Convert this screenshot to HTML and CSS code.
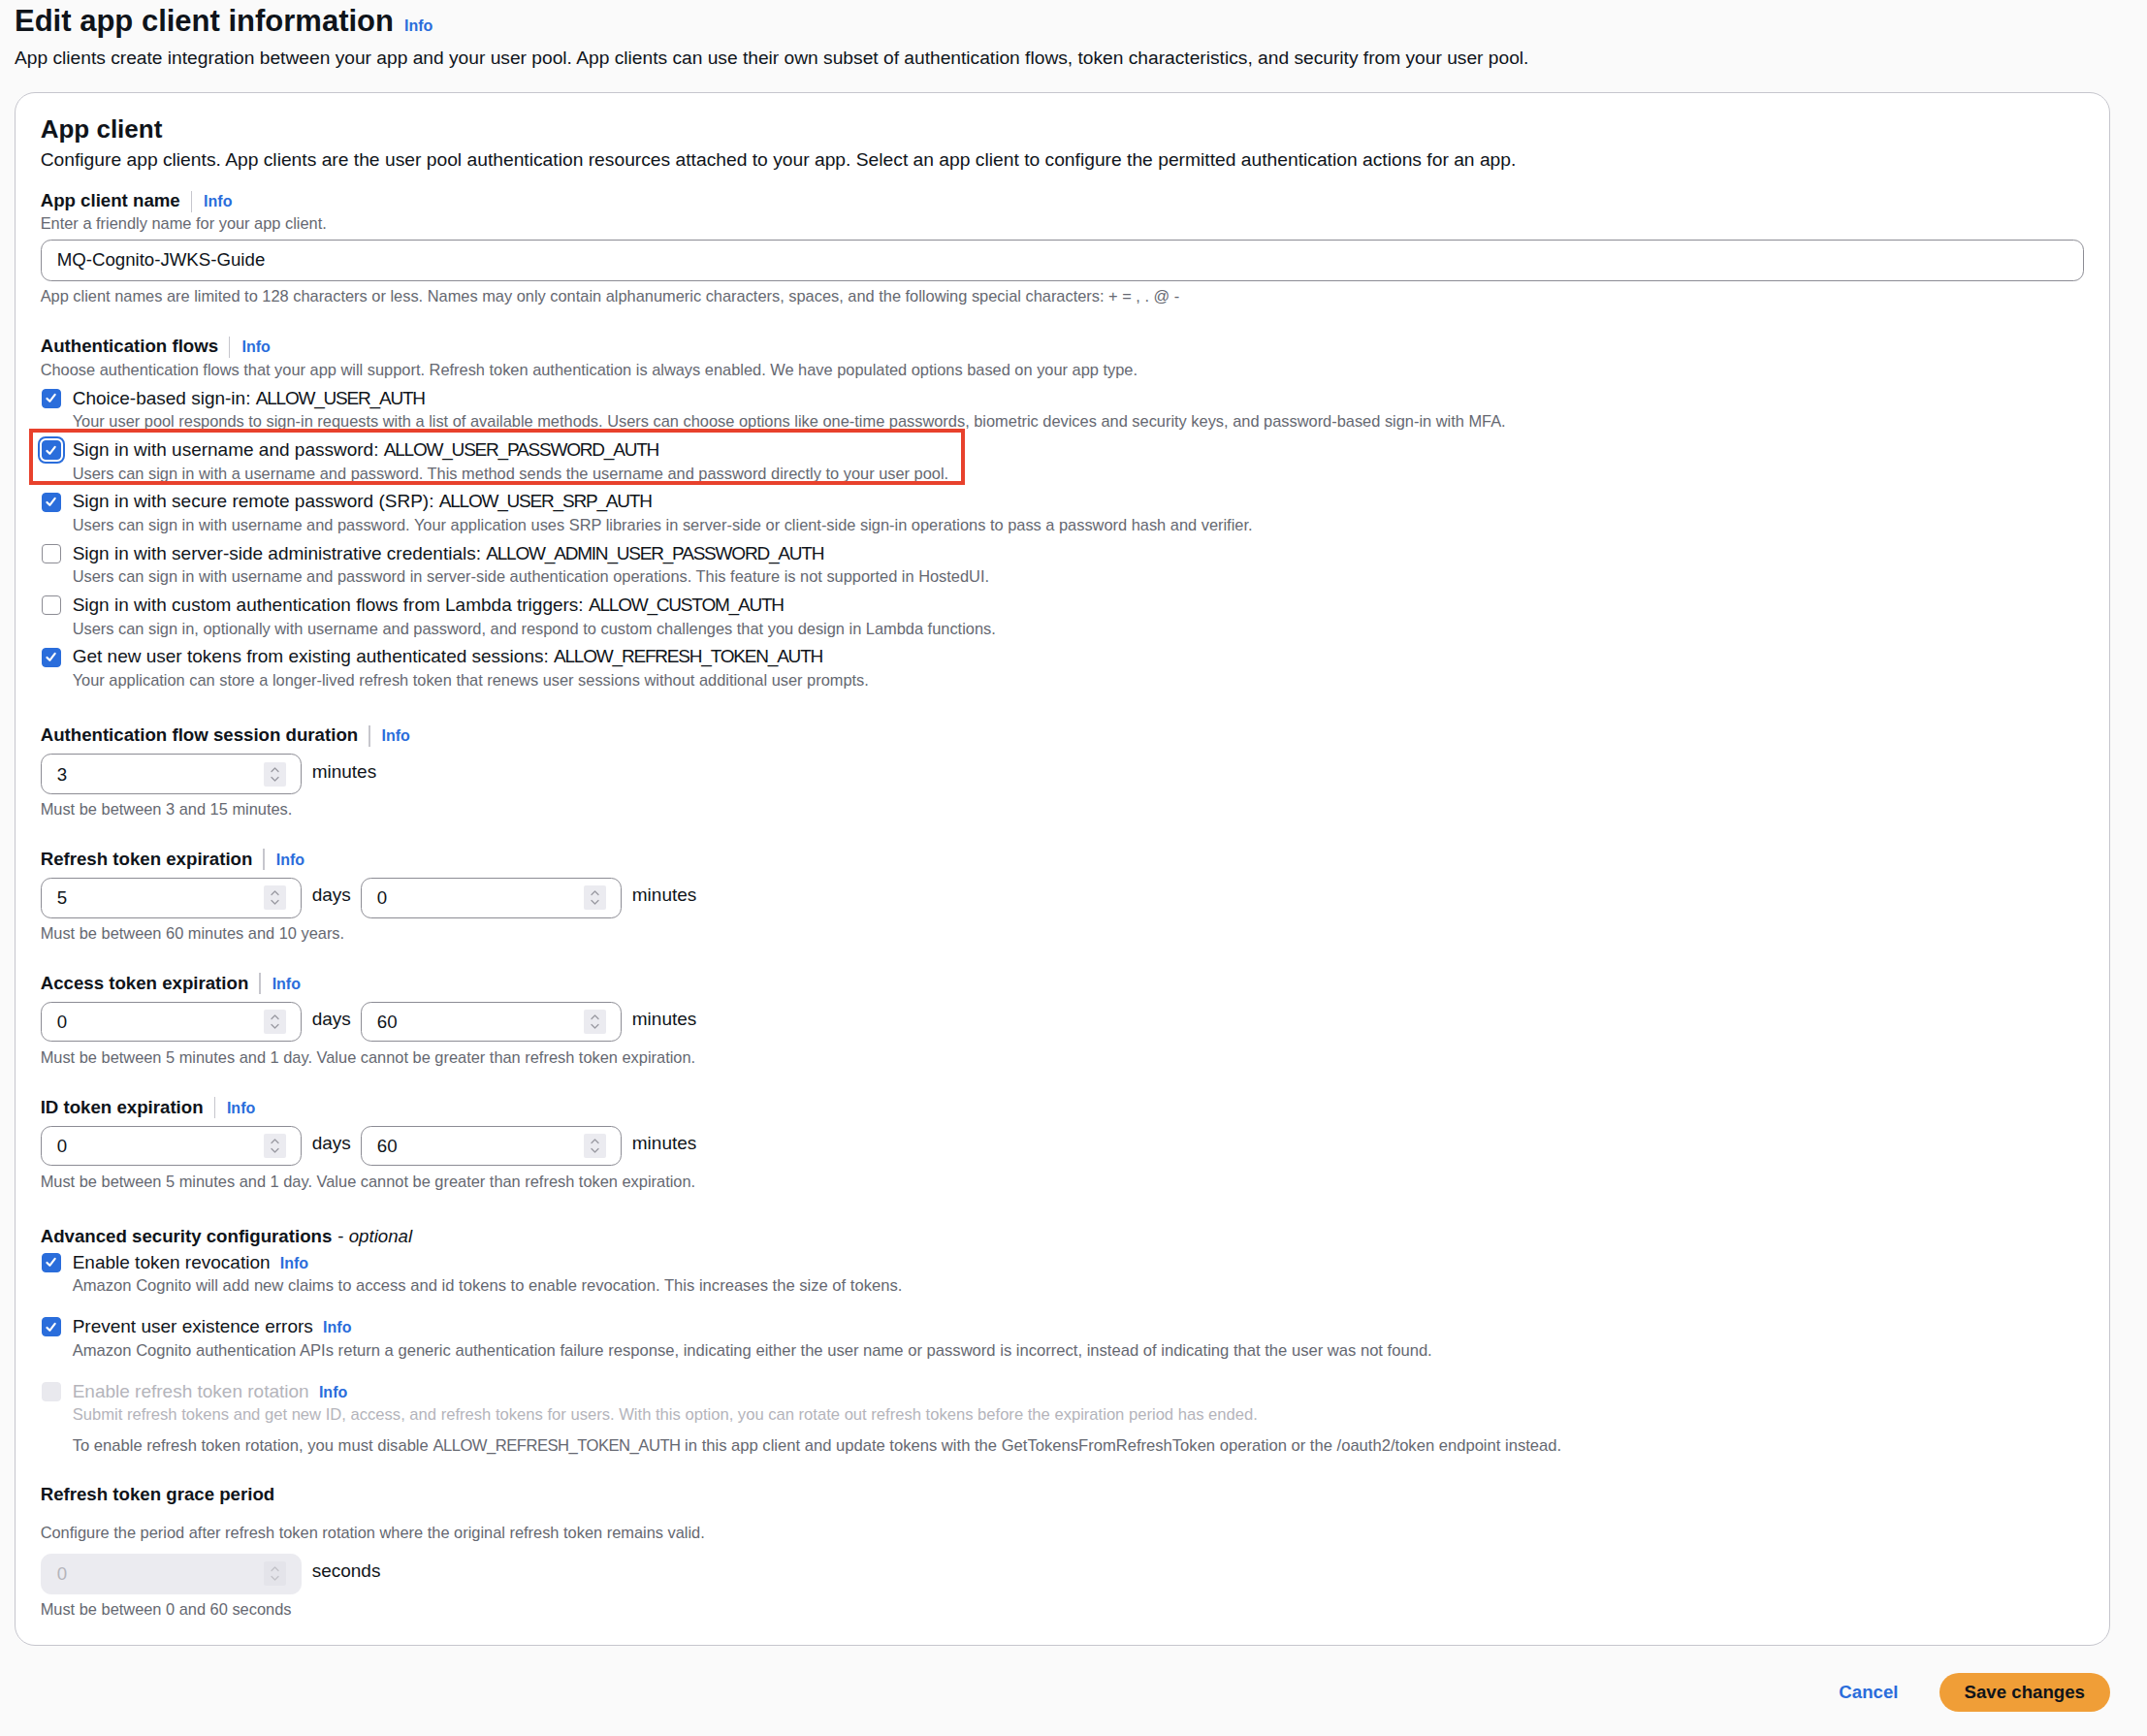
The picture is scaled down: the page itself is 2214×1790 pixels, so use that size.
FILE: index.html
```html
<!DOCTYPE html>
<html lang="en">
<head>
<meta charset="utf-8">
<title>Edit app client information</title>
<link rel="stylesheet" href="styles.css">
</head>
<body>
<div class="page">
  <header class="page-header">
    <h1 class="page-title">Edit app client information <a class="info info-title">Info</a></h1>
    <p class="page-desc">App clients create integration between your app and your user pool. App clients can use their own subset of authentication flows, token characteristics, and security from your user pool.</p>
  </header>

  <section class="card">
    <h2 class="card-title">App client</h2>
    <p class="card-desc">Configure app clients. App clients are the user pool authentication resources attached to your app. Select an app client to configure the permitted authentication actions for an app.</p>

    <div class="field field-first">
      <div class="field-label"><span class="label-text">App client name</span><span class="divider"></span><a class="info">Info</a></div>
      <div class="field-desc">Enter a friendly name for your app client.</div>
      <div class="text-input">MQ-Cognito-JWKS-Guide</div>
      <div class="field-constraint">App client names are limited to 128 characters or less. Names may only contain alphanumeric characters, spaces, and the following special characters: + = , . @ -</div>
    </div>

    <div class="field field-flows">
      <div class="field-label"><span class="label-text">Authentication flows</span><span class="divider"></span><a class="info">Info</a></div>
      <div class="field-desc">Choose authentication flows that your app will support. Refresh token authentication is always enabled. We have populated options based on your app type.</div>
      <div class="cb-list">
        <div class="cb-item">
          <span class="cb checked"><svg viewBox="0 0 14 14"><path d="M3.2 7.4 L5.9 10.1 L10.9 3.6"/></svg></span>
          <div class="cb-body">
            <div class="cb-label">Choice-based sign-in: <span class="ident">ALLOW_USER_AUTH</span></div>
            <div class="cb-desc">Your user pool responds to sign-in requests with a list of available methods. Users can choose options like one-time passwords, biometric devices and security keys, and password-based sign-in with MFA.</div>
          </div>
        </div>
        <div class="cb-item highlighted">
          <span class="cb checked focused"><svg viewBox="0 0 14 14"><path d="M3.2 7.4 L5.9 10.1 L10.9 3.6"/></svg></span>
          <div class="cb-body">
            <div class="cb-label">Sign in with username and password: <span class="ident">ALLOW_USER_PASSWORD_AUTH</span></div>
            <div class="cb-desc">Users can sign in with a username and password. This method sends the username and password directly to your user pool.</div>
          </div>
          <span class="highlight-box"></span>
        </div>
        <div class="cb-item">
          <span class="cb checked"><svg viewBox="0 0 14 14"><path d="M3.2 7.4 L5.9 10.1 L10.9 3.6"/></svg></span>
          <div class="cb-body">
            <div class="cb-label">Sign in with secure remote password (SRP): <span class="ident">ALLOW_USER_SRP_AUTH</span></div>
            <div class="cb-desc">Users can sign in with username and password. Your application uses SRP libraries in server-side or client-side sign-in operations to pass a password hash and verifier.</div>
          </div>
        </div>
        <div class="cb-item">
          <span class="cb"></span>
          <div class="cb-body">
            <div class="cb-label">Sign in with server-side administrative credentials: <span class="ident">ALLOW_ADMIN_USER_PASSWORD_AUTH</span></div>
            <div class="cb-desc">Users can sign in with username and password in server-side authentication operations. This feature is not supported in HostedUI.</div>
          </div>
        </div>
        <div class="cb-item">
          <span class="cb"></span>
          <div class="cb-body">
            <div class="cb-label">Sign in with custom authentication flows from Lambda triggers: <span class="ident">ALLOW_CUSTOM_AUTH</span></div>
            <div class="cb-desc">Users can sign in, optionally with username and password, and respond to custom challenges that you design in Lambda functions.</div>
          </div>
        </div>
        <div class="cb-item">
          <span class="cb checked"><svg viewBox="0 0 14 14"><path d="M3.2 7.4 L5.9 10.1 L10.9 3.6"/></svg></span>
          <div class="cb-body">
            <div class="cb-label">Get new user tokens from existing authenticated sessions: <span class="ident">ALLOW_REFRESH_TOKEN_AUTH</span></div>
            <div class="cb-desc">Your application can store a longer-lived refresh token that renews user sessions without additional user prompts.</div>
          </div>
        </div>
      </div>
    </div>

    <div class="field field-session">
      <div class="field-label"><span class="label-text">Authentication flow session duration</span><span class="divider"></span><a class="info">Info</a></div>
      <div class="num-row">
        <div class="num-input"><span class="num-value">3</span><span class="spinner"><svg viewBox="0 0 23 25"><path d="M8 9.5 L11.5 6 L15 9.5"/><path d="M8 15.5 L11.5 19 L15 15.5"/></svg></span></div>
        <span class="unit">minutes</span>
      </div>
      <div class="field-constraint">Must be between 3 and 15 minutes.</div>
    </div>

    <div class="field field-token">
      <div class="field-label"><span class="label-text">Refresh token expiration</span><span class="divider"></span><a class="info">Info</a></div>
      <div class="num-row">
        <div class="num-input"><span class="num-value">5</span><span class="spinner"><svg viewBox="0 0 23 25"><path d="M8 9.5 L11.5 6 L15 9.5"/><path d="M8 15.5 L11.5 19 L15 15.5"/></svg></span></div>
        <span class="unit">days</span>
        <div class="num-input"><span class="num-value">0</span><span class="spinner"><svg viewBox="0 0 23 25"><path d="M8 9.5 L11.5 6 L15 9.5"/><path d="M8 15.5 L11.5 19 L15 15.5"/></svg></span></div>
        <span class="unit">minutes</span>
      </div>
      <div class="field-constraint">Must be between 60 minutes and 10 years.</div>
    </div>

    <div class="field field-token">
      <div class="field-label"><span class="label-text">Access token expiration</span><span class="divider"></span><a class="info">Info</a></div>
      <div class="num-row">
        <div class="num-input"><span class="num-value">0</span><span class="spinner"><svg viewBox="0 0 23 25"><path d="M8 9.5 L11.5 6 L15 9.5"/><path d="M8 15.5 L11.5 19 L15 15.5"/></svg></span></div>
        <span class="unit">days</span>
        <div class="num-input"><span class="num-value">60</span><span class="spinner"><svg viewBox="0 0 23 25"><path d="M8 9.5 L11.5 6 L15 9.5"/><path d="M8 15.5 L11.5 19 L15 15.5"/></svg></span></div>
        <span class="unit">minutes</span>
      </div>
      <div class="field-constraint">Must be between 5 minutes and 1 day. Value cannot be greater than refresh token expiration.</div>
    </div>

    <div class="field field-token">
      <div class="field-label"><span class="label-text">ID token expiration</span><span class="divider"></span><a class="info">Info</a></div>
      <div class="num-row">
        <div class="num-input"><span class="num-value">0</span><span class="spinner"><svg viewBox="0 0 23 25"><path d="M8 9.5 L11.5 6 L15 9.5"/><path d="M8 15.5 L11.5 19 L15 15.5"/></svg></span></div>
        <span class="unit">days</span>
        <div class="num-input"><span class="num-value">60</span><span class="spinner"><svg viewBox="0 0 23 25"><path d="M8 9.5 L11.5 6 L15 9.5"/><path d="M8 15.5 L11.5 19 L15 15.5"/></svg></span></div>
        <span class="unit">minutes</span>
      </div>
      <div class="field-constraint">Must be between 5 minutes and 1 day. Value cannot be greater than refresh token expiration.</div>
    </div>

    <div class="field field-advanced">
      <div class="field-label"><span class="label-text">Advanced security configurations</span><span class="optional">- <i>optional</i></span></div>
      <div class="adv-list">
        <div class="cb-item">
          <span class="cb checked"><svg viewBox="0 0 14 14"><path d="M3.2 7.4 L5.9 10.1 L10.9 3.6"/></svg></span>
          <div class="cb-body">
            <div class="cb-label">Enable token revocation <a class="info info-inline">Info</a></div>
            <div class="cb-desc">Amazon Cognito will add new claims to access and id tokens to enable revocation. This increases the size of tokens.</div>
          </div>
        </div>
        <div class="cb-item">
          <span class="cb checked"><svg viewBox="0 0 14 14"><path d="M3.2 7.4 L5.9 10.1 L10.9 3.6"/></svg></span>
          <div class="cb-body">
            <div class="cb-label">Prevent user existence errors <a class="info info-inline">Info</a></div>
            <div class="cb-desc">Amazon Cognito authentication APIs return a generic authentication failure response, indicating either the user name or password is incorrect, instead of indicating that the user was not found.</div>
          </div>
        </div>
        <div class="cb-item disabled">
          <span class="cb"></span>
          <div class="cb-body">
            <div class="cb-label">Enable refresh token rotation <a class="info info-inline">Info</a></div>
            <div class="cb-desc">Submit refresh tokens and get new ID, access, and refresh tokens for users. With this option, you can rotate out refresh tokens before the expiration period has ended.</div>
            <div class="cb-note">To enable refresh token rotation, you must disable <span class="ident">ALLOW_REFRESH_TOKEN_AUTH</span> in this app client and update tokens with the GetTokensFromRefreshToken operation or the /oauth2/token endpoint instead.</div>
          </div>
        </div>
      </div>
    </div>

    <div class="field field-grace">
      <div class="field-label"><span class="label-text">Refresh token grace period</span></div>
      <div class="field-desc grace-desc">Configure the period after refresh token rotation where the original refresh token remains valid.</div>
      <div class="num-row grace-row">
        <div class="num-input disabled"><span class="num-value">0</span><span class="spinner"><svg viewBox="0 0 23 25"><path d="M8 9.5 L11.5 6 L15 9.5"/><path d="M8 15.5 L11.5 19 L15 15.5"/></svg></span></div>
        <span class="unit">seconds</span>
      </div>
      <div class="field-constraint">Must be between 0 and 60 seconds</div>
    </div>
  </section>

  <div class="actions">
    <a class="btn-link">Cancel</a>
    <a class="btn-primary">Save changes</a>
  </div>
</div>
</body>
</html>
```

FILE: styles.css
```css
* { box-sizing: border-box; }

html, body { margin: 0; padding: 0; }

body {
  background: #fafafa;
  color: #0f141a;
  font-family: "Liberation Sans", Arial, sans-serif;
  font-size: 18.67px;
  line-height: 26.67px;
}

.page {
  padding: 2px 38px 0 15px;
}

/* Header */
.page-title {
  margin: 0;
  display: flex;
  align-items: baseline;
  gap: 11px;
  font-size: 31px;
  line-height: 40px;
  font-weight: 700;
  color: #0f141a;
}

.page-desc {
  margin: 4.5px 0 0 0;
  font-size: 19.2px;
  color: #0f141a;
}

.info {
  color: #2a6ddb;
  font-weight: 700;
  font-size: 16px;
  line-height: 21px;
  cursor: pointer;
}

.info-title { font-size: 16px; }

/* Card */
.card {
  margin-top: 22px;
  background: #ffffff;
  border: 1.33px solid #c6c6cd;
  border-radius: 21px;
  padding: 21px 25.67px 25px 25.67px;
}

.card-title {
  margin: 0;
  font-size: 26px;
  line-height: 32px;
  font-weight: 700;
}

.card-desc {
  margin: 2.5px 0 0 0;
  font-size: 19.25px;
}

/* Fields */
.field-label {
  display: flex;
  align-items: center;
  font-weight: 700;
  line-height: 26.67px;
}

.label-text { font-weight: 700; }

.divider {
  width: 1.33px;
  height: 22px;
  background: #c6c6cd;
  margin: 0 12px 0 11px;
}

.optional {
  font-weight: 400;
  margin-left: 6px;
}

.field-desc,
.field-constraint,
.cb-desc,
.cb-note {
  font-size: 16.4px;
  line-height: 21.33px;
  color: #656871;
}

.ident { letter-spacing: -1.2px; }
.cb-note .ident { letter-spacing: -0.5px; }

.adv-list .cb-desc,
.adv-list .cb-note { font-size: 16.6px; }

.field-first { margin-top: 16px; }
.field-first .field-desc { margin-top: -1px; }

.text-input {
  margin-top: 6px;
  height: 42.5px;
  border: 1.33px solid #8c8c94;
  border-radius: 10.67px;
  background: #fff;
  padding: 0 16px;
  display: flex;
  align-items: center;
}

.field-constraint { margin-top: 5px; }

.field-flows { margin-top: 28px; }

.cb-list {
  margin-top: 5.5px;
  display: flex;
  flex-direction: column;
  gap: 5.33px;
}

.cb-item {
  position: relative;
  display: grid;
  grid-template-columns: 20px 1fr;
  column-gap: 12px;
  padding-left: 1px;
}

.cb {
  width: 20px;
  height: 20px;
  margin-top: 3.3px;
  border-radius: 4px;
  border: 1.6px solid #8c8c94;
  background: #fff;
  display: flex;
  align-items: center;
  justify-content: center;
}

.cb.checked {
  background: #2a6ddb;
  border-color: #2a6ddb;
}

.cb svg {
  width: 15px;
  height: 15px;
  fill: none;
  stroke: #fff;
  stroke-width: 2;
  stroke-linecap: round;
  stroke-linejoin: round;
}

.cb.focused {
  outline: 2.5px solid #2a6ddb;
  outline-offset: 2px;
}

.cb-label {
  font-size: 19px;
  line-height: 26.67px;
}

.highlight-box {
  position: absolute;
  left: -12px;
  top: -9.5px;
  width: 965px;
  height: 58.5px;
  border: 4.5px solid #e8412c;
  pointer-events: none;
}

/* Number fields */
.field-session { margin-top: 33px; }
.field-token { margin-top: 27.5px; }

.num-row {
  margin-top: 5.3px;
  display: flex;
  align-items: center;
  gap: 11px;
}

.num-input {
  width: 269px;
  height: 41.5px;
  border: 1.33px solid #8c8c94;
  border-radius: 10.67px;
  background: #fff;
  padding: 0 15px 0 16px;
  display: flex;
  align-items: center;
  justify-content: space-between;
}

.num-value { padding-top: 2px; }

.spinner {
  width: 23px;
  height: 25px;
  background: #ebebf0;
  border-radius: 2px;
  display: flex;
}

.spinner svg {
  width: 23px;
  height: 25px;
  fill: none;
  stroke: #9a9aa2;
  stroke-width: 1.3;
  stroke-linecap: round;
  stroke-linejoin: round;
}

.unit {
  margin-top: -4px;
  font-size: 19px;
}

.num-row .num-input + .unit + .num-input { margin-left: -1px; }

.field-token .field-constraint,
.field-session .field-constraint { margin-top: 5.5px; }

/* Advanced */
.field-advanced { margin-top: 33px; }

.adv-list {
  display: flex;
  flex-direction: column;
  gap: 18.5px;
}

.info-inline {
  margin-left: 5px;
  vertical-align: baseline;
}

.cb-item.disabled .cb {
  background: #e9e9ee;
  border-color: #e9e9ee;
}

.cb-item.disabled .cb-label { color: #b4b4bb; }
.cb-item.disabled .cb-desc { color: #b4b4bb; }

.cb-note {
  margin-top: 10.5px;
}

/* Grace period */
.field-grace { margin-top: 26px; }

.grace-desc { margin-top: 15.5px; }

.grace-row { margin-top: 11px; }

.num-input.disabled {
  background: #ebebf0;
  border-color: #ebebf0;
  color: #b4b4bb;
}

.num-input.disabled .spinner { background: #e4e4ea; }
.num-input.disabled .spinner svg { stroke: #c2c2c8; }

.field-grace .field-constraint { margin-top: 5.8px; }

/* Actions */
.actions {
  margin-top: 28px;
  display: flex;
  justify-content: flex-end;
  align-items: center;
  gap: 42px;
}

.btn-link {
  color: #2a6ddb;
  font-weight: 700;
  cursor: pointer;
}

.btn-primary {
  height: 40.7px;
  padding: 0 26px;
  border-radius: 21px;
  background: #f09e37;
  color: #0f141a;
  font-weight: 700;
  display: flex;
  align-items: center;
  cursor: pointer;
}
```
